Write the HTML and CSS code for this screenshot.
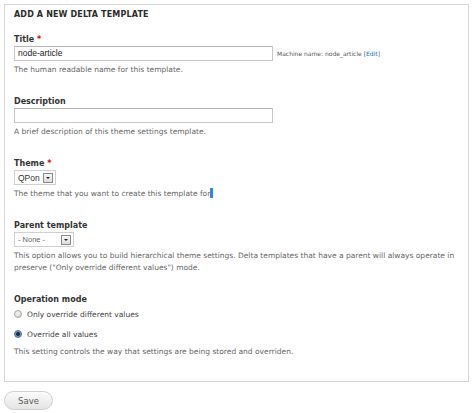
FILE: index.html
```html
<!DOCTYPE html>
<html>
<head>
<meta charset="utf-8">
<link rel="stylesheet" href="styles.css">
</head>
<body>
<div class="page">
  <div class="fieldset">
    <div class="legend">ADD A NEW DELTA TEMPLATE</div>

    <div class="item item-first">
      <div class="label">Title <span class="req">*</span></div>
      <div class="row">
        <div class="textbox">node-article</div>
        <span class="machine">Machine name: node_article <span class="bracket">[<a class="link">Edit</a>]</span></span>
      </div>
      <div class="desc">The human readable name for this template.</div>
    </div>

    <div class="item">
      <div class="label">Description</div>
      <div class="textbox"></div>
      <div class="desc">A brief description of this theme settings template.</div>
    </div>

    <div class="item">
      <div class="label">Theme <span class="req">*</span></div>
      <div class="select select-theme"><span class="sel-text">QPon</span><span class="sel-btn"><span class="arrow"></span></span></div>
      <div class="desc">The theme that you want to create this template for<span class="caret"></span></div>
    </div>

    <div class="item">
      <div class="label">Parent template</div>
      <div class="select select-parent"><span class="sel-text">- None -</span><span class="sel-btn"><span class="arrow"></span></span></div>
      <div class="desc">This option allows you to build hierarchical theme settings. Delta templates that have a parent will always operate in preserve ("Only override different values") mode.</div>
    </div>

    <div class="item">
      <div class="label">Operation mode</div>
      <div class="radio-row"><span class="radio"></span><span class="radio-label">Only override different values</span></div>
      <div class="radio-row"><span class="radio radio-on"></span><span class="radio-label">Override all values</span></div>
      <div class="desc desc-after-radio">This setting controls the way that settings are being stored and overriden.</div>
    </div>
  </div>
  <div class="actions"><span class="save">Save</span></div>
</div>
</body>
</html>
```
FILE: styles.css
```css
html, body {
  margin: 0;
  padding: 0;
  background: #ffffff;
}
body {
  font-family: "DejaVu Sans", Verdana, sans-serif;
  color: #333333;
}
.page {
  padding: 4px 5px 0 4px;
}
.fieldset {
  border: 1px solid #d6d6d6;
  padding: 4px 10px 23px 9px;
}
.legend {
  font-size: 8px;
  font-weight: bold;
  line-height: 12px;
  color: #2b2b2b;
  letter-spacing: 0.15px;
}
.item {
  margin-top: 20px;
}
.item-first {
  margin-top: 13px;
}
.label {
  font-size: 8px;
  font-weight: bold;
  line-height: 12px;
  color: #333333;
}
.req {
  color: #e00000;
}
.row {
  display: flex;
  align-items: center;
}
.textbox {
  box-sizing: border-box;
  width: 259px;
  height: 15px;
  border: 1px solid #c8c8c8;
  border-top-color: #b4b4b4;
  font-family: "Liberation Sans", Arial, sans-serif;
  font-size: 8.5px;
  line-height: 13px;
  padding: 0 3px;
  color: #222222;
  background: #ffffff;
}
.machine {
  margin-left: 4px;
  font-size: 6px;
  color: #555555;
}
.link {
  color: #0074bd;
}
.desc {
  margin-top: 3px;
  font-size: 7.5px;
  line-height: 12px;
  color: #666666;
}
.desc-after-radio {
  margin-top: 6px;
}
.caret {
  display: inline-block;
  width: 3px;
  height: 10px;
  background: #3b82e0;
  vertical-align: -2px;
}
.select {
  box-sizing: border-box;
  display: flex;
  align-items: center;
  height: 15px;
  border: 1px solid #d0d0d0;
  background: #ffffff;
  font-family: "Liberation Sans", Arial, sans-serif;
  font-size: 8.5px;
  color: #333333;
  padding: 0 2px 0 3px;
}
.select-theme {
  width: 42px;
  justify-content: space-between;
}
.select-parent {
  width: 60px;
  justify-content: space-between;
}
.select-parent .sel-text {
  font-size: 7.5px;
  color: #666666;
}
.sel-btn {
  box-sizing: border-box;
  width: 10px;
  height: 10px;
  border: 1px solid #8a8a8a;
  background: linear-gradient(#f8f8f8, #dcdcdc);
  display: flex;
  align-items: center;
  justify-content: center;
}
.arrow {
  width: 0;
  height: 0;
  border-left: 2px solid transparent;
  border-right: 2px solid transparent;
  border-top: 2px solid #222222;
}
.radio-row {
  display: flex;
  align-items: center;
  height: 12px;
  margin-top: 2px;
}
.radio-row + .radio-row {
  margin-top: 8px;
}
.radio {
  box-sizing: border-box;
  width: 8px;
  height: 8px;
  border-radius: 50%;
  border: 1px solid #a8a8a8;
  background: radial-gradient(circle at 40% 35%, #f4f4f4, #cfcfcf);
  margin-right: 5px;
}
.radio-on {
  border-color: #4a6a90;
  background: radial-gradient(circle, #1c2d45 0 1.6px, #5d8fc9 2.2px, #a9c8ea 100%);
}
.radio-label {
  font-size: 7.5px;
  color: #444444;
}
.actions {
  display: flex;
  margin-top: 9px;
}
.save {
  box-sizing: border-box;
  display: flex;
  align-items: center;
  justify-content: center;
  width: 49px;
  height: 19px;
  border: 1px solid #cfcfcf;
  border-radius: 10px;
  background: linear-gradient(#fbfbfb, #e4e4e4);
  font-size: 8.5px;
  color: #5a5a5a;
}
```
